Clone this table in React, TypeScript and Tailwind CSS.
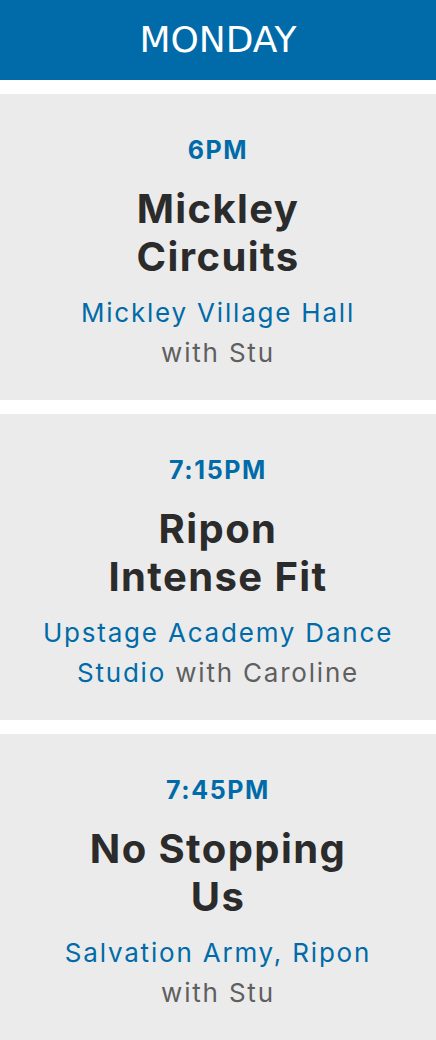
const classes = [
  {
    time: "6PM",
    title: ["Mickley", "Circuits"],
    venue: "Mickley Village Hall",
    instructor: "Stu",
    breakVenue: true,
  },
  {
    time: "7:15PM",
    title: ["Ripon", "Intense Fit"],
    venue: "Upstage Academy Dance Studio",
    instructor: "Caroline",
    breakVenue: false,
  },
  {
    time: "7:45PM",
    title: ["No Stopping", "Us"],
    venue: "Salvation Army, Ripon",
    instructor: "Stu",
    breakVenue: true,
  },
];

export default function App() {
  return (
    <div className="min-h-screen bg-white" style={{ fontFamily: "Inter, 'Open Sans', sans-serif" }}>
      <header className="flex h-[80px] items-center justify-center bg-[#006ba8]">
        <h1
          className="text-[36px] leading-none text-white"
          style={{ fontFamily: "'DejaVu Sans', sans-serif" }}
        >
          MONDAY
        </h1>
      </header>
      <div className="flex flex-col gap-[14px] pt-[14px]">
        {classes.map((c) => (
          <section
            key={c.time}
            className="flex h-[306px] flex-col items-center bg-[#ebebeb] px-[30px] pt-[38px] text-center"
          >
            <p className="text-[25px] font-bold leading-[36px] tracking-[1.6px] text-[#006ba8]">
              {c.time}
            </p>
            <h2 className="mt-[17px] text-[40px] font-bold leading-[48px] tracking-[1.4px] text-[#2b2b2b]">
              {c.title[0]}
              <br />
              {c.title[1]}
            </h2>
            <p className="mt-[12px] text-[26px] leading-[40px] tracking-[1.8px] text-[#5f5f5f]">
              <span className="text-[#006ba8]">{c.venue}</span>
              {c.breakVenue ? <br /> : " "}
              with {c.instructor}
            </p>
          </section>
        ))}
      </div>
    </div>
  );
}
